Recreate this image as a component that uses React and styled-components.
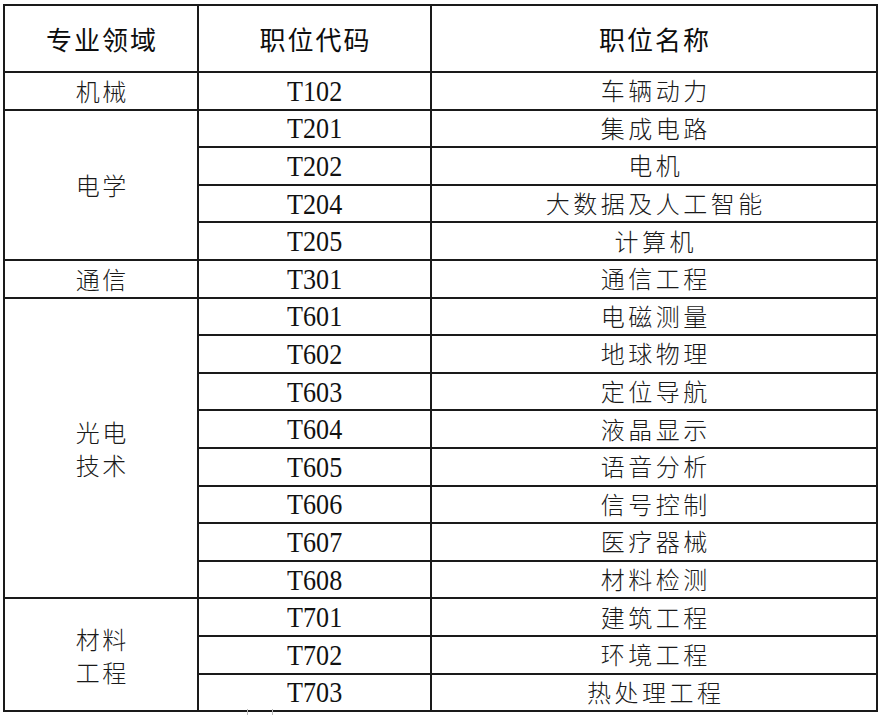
import React from 'react';
import styled, { createGlobalStyle } from 'styled-components';

const GlobalStyle = createGlobalStyle`
  html, body {
    margin: 0;
    padding: 0;
    background: #fff;
  }
  body {
    font-family: "Liberation Serif", "Noto Sans CJK SC", serif;
    color: #111;
  }
`;

const Page = styled.div`
  position: relative;
  width: 880px;
  height: 715px;
  padding: 4px 0 0 3px;
  box-sizing: border-box;
  overflow: hidden;
`;

const Table = styled.table`
  width: 873px;
  table-layout: fixed;
  border-collapse: collapse;
  border: 2px solid #1a1a1a;
`;

const HeadRow = styled.tr`
  height: 67px;
`;

const Row = styled.tr`
  height: 37.6px;
`;

const HeadCell = styled.th`
  border: 2px solid #1a1a1a;
  padding: 0 0 0 2px;
  font-family: "Noto Sans CJK SC", sans-serif;
  font-size: 26px;
  font-weight: 400;
  letter-spacing: 2px;
  text-align: center;
  vertical-align: middle;
  color: #0d0d0d;
`;

const Cell = styled.td`
  border: 2px solid #1a1a1a;
  padding: 0;
  text-align: center;
  vertical-align: middle;
  line-height: 1;
`;

const Zh = styled.span`
  display: inline-block;
  font-family: "Noto Sans CJK SC", sans-serif;
  font-weight: 300;
  font-size: 24px;
  letter-spacing: ${p => (p.$group ? '2.5px' : '3.5px')};
  padding-left: ${p => (p.$group ? '2.5px' : '3.5px')};
  line-height: ${p => (p.$group ? '33px' : '1')};
  color: #1a1a1a;
`;

const Code = styled.span`
  display: inline-block;
  font-family: "Liberation Serif", serif;
  font-size: 30px;
  transform: scaleX(0.87);
  color: #111;
`;

const Stub = styled.div`
  position: absolute;
  left: 247px;
  top: 709px;
  width: 24px;
  height: 8px;
  border-left: 1px solid #bbb;
  border-right: 1px solid #bbb;
`;

const groups = [
  { field: ['机械'], rows: [['T102', '车辆动力']] },
  {
    field: ['电学'],
    rows: [
      ['T201', '集成电路'],
      ['T202', '电机'],
      ['T204', '大数据及人工智能'],
      ['T205', '计算机'],
    ],
  },
  { field: ['通信'], rows: [['T301', '通信工程']] },
  {
    field: ['光电', '技术'],
    rows: [
      ['T601', '电磁测量'],
      ['T602', '地球物理'],
      ['T603', '定位导航'],
      ['T604', '液晶显示'],
      ['T605', '语音分析'],
      ['T606', '信号控制'],
      ['T607', '医疗器械'],
      ['T608', '材料检测'],
    ],
  },
  {
    field: ['材料', '工程'],
    rows: [
      ['T701', '建筑工程'],
      ['T702', '环境工程'],
      ['T703', '热处理工程'],
    ],
  },
];

export default function App() {
  return (
    <Page>
      <GlobalStyle />
      <Table>
        <colgroup>
          <col style={{ width: 194 }} />
          <col style={{ width: 233 }} />
          <col style={{ width: 446 }} />
        </colgroup>
        <thead>
          <HeadRow>
            <HeadCell>专业领域</HeadCell>
            <HeadCell>职位代码</HeadCell>
            <HeadCell>职位名称</HeadCell>
          </HeadRow>
        </thead>
        <tbody>
          {groups.map(g =>
            g.rows.map(([code, name], i) => (
              <Row key={code}>
                {i === 0 && (
                  <Cell rowSpan={g.rows.length}>
                    {g.field.map(line => (
                      <div key={line}>
                        <Zh $group>{line}</Zh>
                      </div>
                    ))}
                  </Cell>
                )}
                <Cell>
                  <Code>{code}</Code>
                </Cell>
                <Cell>
                  <Zh>{name}</Zh>
                </Cell>
              </Row>
            ))
          )}
        </tbody>
      </Table>
      <Stub />
    </Page>
  );
}
